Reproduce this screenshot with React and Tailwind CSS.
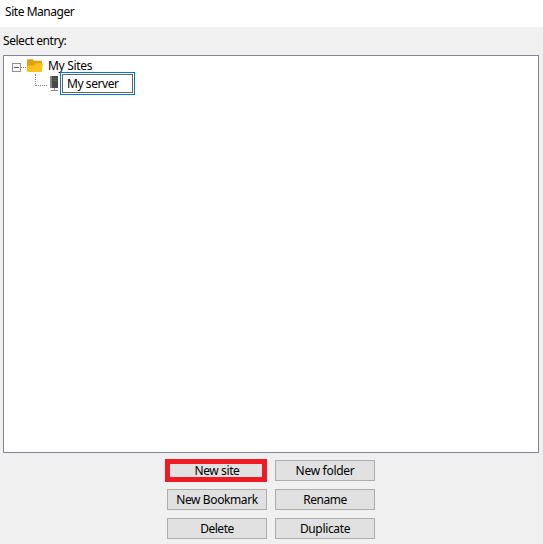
import React, { useState } from 'react';
import clsx from 'clsx';

const actions = [
  { label: 'New site', spacing: 'tracking-[-0.4px]', highlighted: true },
  { label: 'New folder', spacing: 'tracking-[-0.3px]' },
  { label: 'New Bookmark', spacing: 'tracking-[-0.4px]' },
  { label: 'Rename', spacing: 'tracking-[-0.5px]' },
  { label: 'Delete', spacing: 'tracking-[-0.5px]' },
  { label: 'Duplicate', spacing: 'tracking-[-0.35px]' },
];

function Expander() {
  return (
    <svg width="9" height="9" viewBox="0 0 9 9" shapeRendering="crispEdges" className="mt-[6px] shrink-0">
      <rect x="0.5" y="0.5" width="8" height="8" fill="#fafafa" stroke="#919191" />
      <path d="M2 4.5h5" stroke="#4b63a7" />
    </svg>
  );
}

function FolderIcon() {
  return (
    <svg width="16" height="14" viewBox="0 0 16 14" className="mt-[2px] shrink-0">
      <path d="M0 1.2Q0 .3 .9 .3H5.6L7.2 1.8H14.2Q15 1.8 15 2.6V12H0z" fill="#e0a010" />
      <path d="M.3 7.3Q.5 6.5 1.3 6.5H7.2L9.2 4.3H15.3Q16 4.3 15.8 5L14.9 12.2Q14.8 13 14 13H.8Q0 13 .1 12.2z" fill="#ffc21a" />
    </svg>
  );
}

function ServerIcon() {
  return (
    <svg width="9" height="16" viewBox="0 0 9 16" className="shrink-0">
      <path d="M0 0h8v12H0z" fill="#858585" />
      <path d="M2 0h6v12H2z" fill="#484848" />
      <path d="M3 2.5h4M3 4.5h4" stroke="#347c3b" />
      <path d="M4.5 12v3M1 14.5h7" stroke="#858585" />
    </svg>
  );
}

function ActionButton({ label, spacing, highlighted }) {
  return (
    <button
      className={clsx(
        'flex h-[21px] w-[100px] items-center justify-center border border-[#adadad] bg-[#e1e1e1] leading-none whitespace-nowrap',
        spacing,
        highlighted && 'relative'
      )}
    >
      {label}
      {highlighted && (
        <span className="pointer-events-none absolute -top-[2px] -right-[1px] -bottom-[2px] -left-[3px] border-[5px] border-[#ed1c24]" />
      )}
    </button>
  );
}

export default function App() {
  const [name, setName] = useState('My server');

  return (
    <div className="flex h-[544px] w-[543px] flex-col overflow-hidden bg-[#f0f0f0] font-['Noto_Sans','Open_Sans',sans-serif] text-[12px] text-black">
      {/* Title bar */}
      <div className="h-[27px] shrink-0 bg-white pl-[5px] leading-[24px] tracking-[-0.45px]">Site Manager</div>

      <div className="h-7 shrink-0 pl-[3px] leading-[28px] tracking-[-0.45px]">Select entry:</div>

      {/* Site tree */}
      <div className="ml-[3px] h-[398px] w-[536px] shrink-0 border border-[#828790] bg-white">
        <div className="mt-[1px] flex h-[15px] items-start pl-[8px]">
          <Expander />
          <span className="mt-[10px] mr-[1px] w-[5px] border-t border-dotted border-[#808080]" />
          <FolderIcon />
          <span className="ml-[5px] leading-[18px] tracking-[-0.3px]">My Sites</span>
        </div>
        <div className="flex h-[23px] items-start pl-[31px]">
          <span className="mt-[2px] h-[12px] w-[12px] border-b border-l border-dotted border-[#808080]" />
          <span className="ml-[3px] mt-[4px] h-4 w-[9px]">
            <ServerIcon />
          </span>
          <div className="ml-[1px] h-[23px] w-[75px] border border-[#0078d7] p-[1px]">
            <input
              value={name}
              onChange={(e) => setName(e.target.value)}
              className="block h-[19px] w-[71px] border border-[#646464] bg-white pl-[4px] leading-none tracking-[-0.42px] outline-none"
            />
          </div>
        </div>
      </div>

      {/* Entry actions */}
      <div className="mt-[7px] ml-[167px] grid w-[208px] grid-cols-2 gap-x-2 gap-y-2">
        {actions.map((a) => (
          <ActionButton key={a.label} {...a} />
        ))}
      </div>
    </div>
  );
}
